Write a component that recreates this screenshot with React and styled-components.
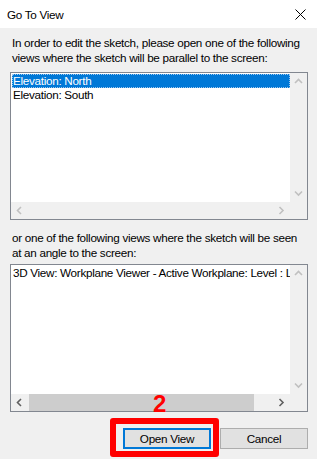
import React from 'react'
import styled, { createGlobalStyle } from 'styled-components'

const Global = createGlobalStyle`
  html, body { margin: 0; padding: 0; background: #f0f0f0; }
  body {
    font-family: "Liberation Sans", Arial, sans-serif;
    font-size: 11.7px;
    letter-spacing: -0.3px;
    color: #000;
  }
`

const Window = styled.div`
  width: 317px;
  height: 459px;
  display: flex;
  flex-direction: column;
  background: #f0f0f0;
  overflow: hidden;
`

const TitleBar = styled.div`
  height: 28px;
  background: #ffffff;
  display: flex;
  align-items: center;
  justify-content: space-between;
  padding: 0 8px 0 7px;
  flex-shrink: 0;
`

const Title = styled.span`
  color: #000;
`

const Close = styled.svg`
  width: 11px;
  height: 11px;
  margin-right: 3px;
`

const Body = styled.div`
  display: flex;
  flex-direction: column;
  padding: 7px 9px 0 10px;
`

const Prompt = styled.p`
  margin: ${p => p.$top || 0}px 0 0 2px;
  line-height: 15px;
  white-space: nowrap;
`

const ListBox = styled.div`
  margin-top: ${p => p.$gap}px;
  height: 148px;
  border: 1px solid #828790;
  box-sizing: border-box;
  display: grid;
  grid-template-columns: 1fr 17px;
  grid-template-rows: 1fr 17px;
  background: #fff;
`

const Items = styled.div`
  padding: 1px 0 0 1px;
  overflow: hidden;
  min-width: 0;
`

const Item = styled.div`
  height: 14px;
  line-height: 14px;
  padding-left: 1px;
  white-space: nowrap;
  overflow: hidden;
  background: ${p => (p.$selected ? '#0078d7' : 'transparent')};
  color: ${p => (p.$selected ? '#fff' : '#000')};
  outline: ${p => (p.$selected ? '1px dotted #9cc6ee' : 'none')};
  outline-offset: -1px;
`

const VBar = styled.div`
  background: #f0f0f0;
  display: flex;
  flex-direction: column;
  justify-content: space-between;
  align-items: center;
`

const HBar = styled.div`
  background: #f0f0f0;
  display: flex;
  align-items: center;
`

const Corner = styled.div`
  background: #f0f0f0;
`

const ArrowBox = styled.div`
  width: 17px;
  height: 17px;
  display: flex;
  align-items: center;
  justify-content: center;
  flex-shrink: 0;
`

const Thumb = styled.div`
  flex: ${p => p.$size};
  height: 17px;
  margin-left: 1px;
  background: #cdcdcd;
`

const Track = styled.div`
  flex: ${p => p.$size};
`

const Buttons = styled.div`
  display: flex;
  justify-content: flex-end;
  gap: 9px;
  margin-top: 16px;
`

const Button = styled.button`
  width: 88px;
  height: 21px;
  box-sizing: border-box;
  font-family: inherit;
  font-size: inherit;
  letter-spacing: inherit;
  color: #000;
  background: #e1e1e1;
  border: 1px solid ${p => (p.$primary ? '#0078d7' : '#adadad')};
  box-shadow: ${p => (p.$primary ? 'inset 0 0 0 1px #0078d7' : 'none')};
  padding: 0;
  line-height: 19px;
  position: relative;
`

const Highlight = styled.div`
  position: absolute;
  left: -14px;
  top: -11px;
  width: 109px;
  height: 39px;
  box-sizing: border-box;
  border: 6px solid #ff0000;
  border-radius: 3px;
  pointer-events: none;
`

const Step = styled.span`
  position: absolute;
  left: 29px;
  top: -37px;
  font-family: "Liberation Sans", Arial, sans-serif;
  font-weight: bold;
  font-size: 24px;
  line-height: 24px;
  letter-spacing: 0;
  color: #ff0000;
`

const Chevron = ({ dir, dark }) => {
  const paths = {
    up: 'M1 5 L4.5 1.5 L8 5',
    down: 'M1 1.5 L4.5 5 L8 1.5',
    left: 'M5 1 L1.5 4.5 L5 8',
    right: 'M1.5 1 L5 4.5 L1.5 8',
  }
  const vertical = dir === 'up' || dir === 'down'
  return (
    <svg width={vertical ? 9 : 7} height={vertical ? 7 : 9} viewBox={vertical ? '0 0 9 7' : '0 0 7 9'}>
      <path d={paths[dir]} fill="none" stroke={dark ? '#606060' : '#c0c0c0'} strokeWidth="1.6" />
    </svg>
  )
}

const List = ({ items, gap, hScroll }) => (
  <ListBox $gap={gap}>
    <Items>
      {items.map((it, i) => (
        <Item key={i} $selected={it.selected}>{it.label}</Item>
      ))}
    </Items>
    <VBar>
      <ArrowBox><Chevron dir="up" /></ArrowBox>
      <ArrowBox><Chevron dir="down" /></ArrowBox>
    </VBar>
    <HBar>
      <ArrowBox><Chevron dir="left" dark={hScroll} /></ArrowBox>
      {hScroll ? (
        <>
          <Thumb $size={223} />
          <Track $size={19} />
        </>
      ) : (
        <Track $size={1} />
      )}
      <ArrowBox><Chevron dir="right" dark={hScroll} /></ArrowBox>
    </HBar>
    <Corner />
  </ListBox>
)

export default function App() {
  return (
    <>
      <Global />
      <Window>
        <TitleBar>
          <Title>Go To View</Title>
          <Close viewBox="0 0 11 11">
            <path d="M0.5 0.5 L10.5 10.5 M10.5 0.5 L0.5 10.5" stroke="#000" strokeWidth="1" />
          </Close>
        </TitleBar>
        <Body>
          <Prompt>
            In order to edit the sketch, please open one of the following
            <br />
            views where the sketch will be parallel to the screen:
          </Prompt>
          <List
            gap={7}
            items={[
              { label: 'Elevation: North', selected: true },
              { label: 'Elevation: South' },
            ]}
          />
          <Prompt $top={10}>
            or one of the following views where the sketch will be seen
            <br />
            at an angle to the screen:
          </Prompt>
          <List
            gap={4}
            hScroll
            items={[{ label: '3D View: Workplane Viewer - Active Workplane: Level : Level 1' }]}
          />
          <Buttons>
            <Button $primary>
              Open View
              <Highlight />
              <Step>2</Step>
            </Button>
            <Button>Cancel</Button>
          </Buttons>
        </Body>
      </Window>
    </>
  )
}
